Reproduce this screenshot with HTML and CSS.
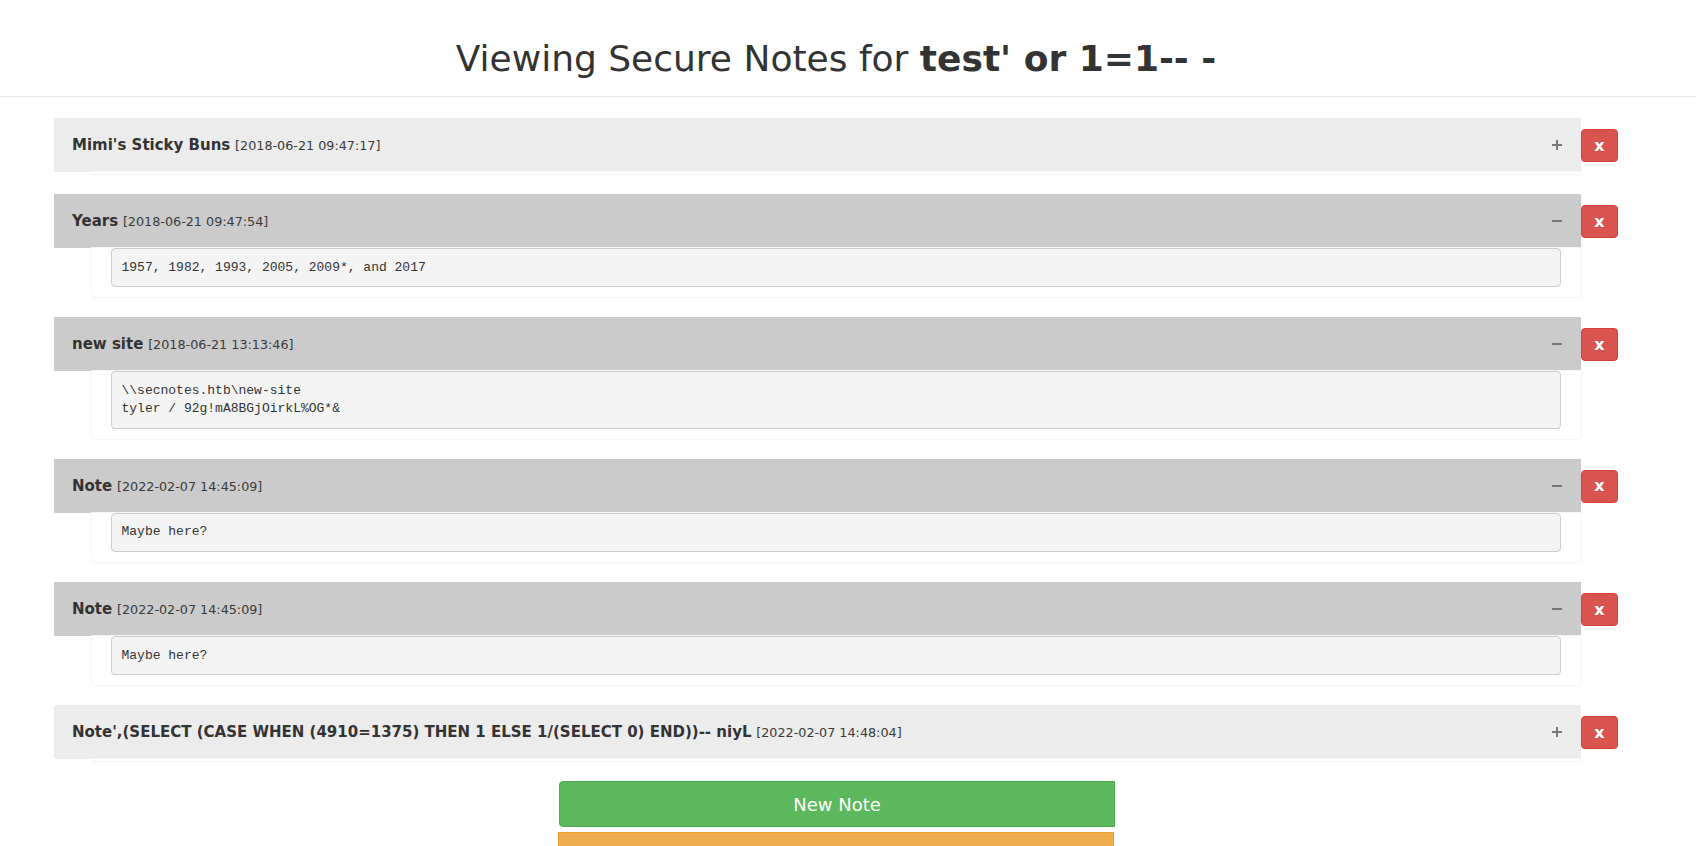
FILE: index.html
```html
<!DOCTYPE html>
<html lang="en">
<head>
<meta charset="utf-8">
<title>Secure Notes</title>
<link rel="stylesheet" href="styles.css">
</head>
<body>
<header class="top">
  <div class="top-inner">
    <h1 class="title">Viewing Secure Notes for <b>test' or 1=1-- -</b></h1>
  </div>
</header>
<main class="wrap">
  <div class="note">
    <div class="note-main">
      <div class="note-head closed">
        <span class="note-title"><b>Mimi's Sticky Buns</b> <small>[2018-06-21 09:47:17]</small></span>
        <svg class="tog" width="10" height="10" viewBox="0 0 10 10"><path d="M0 5H10M5 0V10" stroke="#777" stroke-width="2"/></svg>
      </div>
      <div class="note-body empty"></div>
    </div>
    <button class="del">x</button>
  </div>

  <div class="note">
    <div class="note-main">
      <div class="note-head open">
        <span class="note-title"><b>Years</b> <small>[2018-06-21 09:47:54]</small></span>
        <svg class="tog" width="10" height="10" viewBox="0 0 10 10"><path d="M0 5H10" stroke="#777" stroke-width="2"/></svg>
      </div>
      <div class="note-body"><pre class="note-text">1957, 1982, 1993, 2005, 2009*, and 2017</pre></div>
    </div>
    <button class="del">x</button>
  </div>

  <div class="note">
    <div class="note-main">
      <div class="note-head open">
        <span class="note-title"><b>new site</b> <small>[2018-06-21 13:13:46]</small></span>
        <svg class="tog" width="10" height="10" viewBox="0 0 10 10"><path d="M0 5H10" stroke="#777" stroke-width="2"/></svg>
      </div>
      <div class="note-body"><pre class="note-text">\\secnotes.htb\new-site
tyler / 92g!mA8BGjOirkL%OG*&amp;</pre></div>
    </div>
    <button class="del">x</button>
  </div>

  <div class="note">
    <div class="note-main">
      <div class="note-head open">
        <span class="note-title"><b>Note</b> <small>[2022-02-07 14:45:09]</small></span>
        <svg class="tog" width="10" height="10" viewBox="0 0 10 10"><path d="M0 5H10" stroke="#777" stroke-width="2"/></svg>
      </div>
      <div class="note-body"><pre class="note-text">Maybe here?</pre></div>
    </div>
    <button class="del">x</button>
  </div>

  <div class="note">
    <div class="note-main">
      <div class="note-head open">
        <span class="note-title"><b>Note</b> <small>[2022-02-07 14:45:09]</small></span>
        <svg class="tog" width="10" height="10" viewBox="0 0 10 10"><path d="M0 5H10" stroke="#777" stroke-width="2"/></svg>
      </div>
      <div class="note-body"><pre class="note-text">Maybe here?</pre></div>
    </div>
    <button class="del">x</button>
  </div>

  <div class="note">
    <div class="note-main">
      <div class="note-head closed">
        <span class="note-title"><b>Note',(SELECT (CASE WHEN (4910=1375) THEN 1 ELSE 1/(SELECT 0) END))-- niyL</b> <small>[2022-02-07 14:48:04]</small></span>
        <svg class="tog" width="10" height="10" viewBox="0 0 10 10"><path d="M0 5H10M5 0V10" stroke="#777" stroke-width="2"/></svg>
      </div>
      <div class="note-body empty"></div>
    </div>
    <button class="del">x</button>
  </div>

  <div class="actions">
    <button class="btn btn-new">New Note</button>
    <button class="btn btn-warn" aria-label="Change Password"></button>
  </div>
</main>
</body>
</html>
```

FILE: styles.css
```css
html {
  overflow: hidden;
}
body {
  margin: 0;
  background: #fff;
  color: #333;
  font-family: "DejaVu Sans", "Noto Sans", sans-serif;
  font-size: 14px;
}
.top {
  padding: 39px 0 17px;
  border-bottom: 1px solid #e8e8e8;
}
.top-inner {
  width: 1564px;
  margin-left: 54px;
  text-align: center;
}
.title {
  margin: 0;
  font-size: 36px;
  line-height: 40px;
  font-weight: 400;
  color: #333;
}
.title b {
  font-weight: 700;
}
.wrap {
  width: 1564px;
  margin-left: 54px;
  padding-top: 21px;
}
.note {
  display: flex;
  align-items: flex-start;
  margin-bottom: 20px;
}
.note-main {
  width: 1527px;
}
.note-head {
  height: 54px;
  display: flex;
  align-items: center;
  justify-content: space-between;
  padding: 0 19px 0 18px;
  box-sizing: border-box;
}
.note-head.closed {
  background: #ececec;
}
.note-head.open {
  background: #cbcbcb;
}
.note-title {
  font-size: 15px;
  color: #333;
  white-space: nowrap;
}
.note-title b {
  font-weight: 700;
}
.note-title small {
  font-size: 85%;
  color: #3a3a3a;
}
.tog {
  display: block;
  flex: none;
}
.note-body {
  margin-left: 38px;
  border-radius: 0 0 4px 4px;
  box-shadow: 0 0 0 1px #f6f6f6, 0 1px 2px rgba(0, 0, 0, 0.04);
  padding: 0 20px 10px 19px;
}
.note-body.empty {
  height: 2px;
  padding: 0;
}
.note-text {
  margin: 0;
  padding: 9.5px;
  background: #f4f4f4;
  border: 1px solid #ccc;
  border-radius: 4px;
  font-family: "Liberation Mono", "DejaVu Sans Mono", monospace;
  font-size: 13px;
  line-height: 18.3px;
  color: #333;
  white-space: pre;
}
.del {
  flex: none;
  margin-top: 11px;
  width: 37px;
  height: 33px;
  padding: 0;
  border: 1px solid #d43f3a;
  border-radius: 4px;
  background: #d9534f;
  color: #fff;
  font-family: "DejaVu Sans", sans-serif;
  font-size: 16px;
  font-weight: 700;
  line-height: 1;
}
.actions {
  width: 556px;
  margin: 0 auto;
  display: flex;
  flex-direction: column;
  gap: 5px;
}
.btn {
  display: block;
  width: 556px;
  height: 46px;
  padding: 0 16px;
  font-family: "DejaVu Sans", sans-serif;
  font-size: 18px;
  color: #fff;
}
.btn-new {
  margin-left: 1px;
  background: #5cb85c;
  border: 1px solid #4cae4c;
  border-radius: 4px 0 0 4px;
}
.btn-warn {
  background: #f0ad4e;
  border: 1px solid #eea236;
  border-radius: 0;
}
```
